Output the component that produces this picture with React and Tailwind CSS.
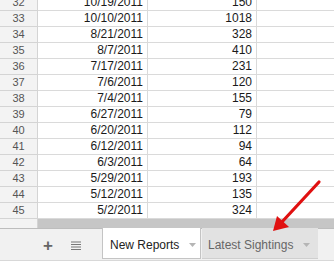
import React from "react";

const rows = [
  [32, "10/19/2011", 150],
  [33, "10/10/2011", 1018],
  [34, "8/21/2011", 328],
  [35, "8/7/2011", 410],
  [36, "7/17/2011", 231],
  [37, "7/6/2011", 120],
  [38, "7/4/2011", 155],
  [39, "6/27/2011", 79],
  [40, "6/20/2011", 112],
  [41, "6/12/2011", 94],
  [42, "6/3/2011", 64],
  [43, "5/29/2011", 193],
  [44, "5/12/2011", 135],
  [45, "5/2/2011", 324],
];

const Caret = () => (
  <svg width="7" height="4" viewBox="0 0 7 4" className="ml-[10px]">
    <path d="M0 0h7L3.5 4z" fill="#b5b5b5" />
  </svg>
);

const App = () => {
  return (
    <div
      className="relative w-[334px] h-[265px] overflow-hidden bg-white"
      style={{ fontFamily: '"Liberation Sans", Arial, sans-serif' }}
    >
      {/* Sheet rows */}
      <div className="-mt-[5px]">
        {rows.map(([n, date, count]) => (
          <div key={n} className="flex h-[16px] text-[12px] leading-[15px]">
            <div className="w-[38px] shrink-0 bg-[#f3f3f3] border-r border-b border-[#d4d4d4] text-center text-[11px] text-[#555]">
              {n}
            </div>
            <div className="w-[110px] shrink-0 border-r border-b border-[#dadada] text-right pr-[4px] text-[#1a1a1a]">
              {date}
            </div>
            <div className="w-[109px] shrink-0 border-r border-b border-[#dadada] text-right pr-[4px] text-[#1a1a1a]">
              {count}
            </div>
            <div className="flex-1 border-b border-[#dadada]" />
          </div>
        ))}
      </div>

      {/* Horizontal scrollbar */}
      <div className="flex h-[9px]">
        <div className="w-[38px] bg-[#f3f3f3] border-r border-[#d4d4d4]" />
        <div className="flex-1 bg-[#c6c6c6]" />
      </div>

      {/* Sheet tab bar */}
      <div className="flex h-[32px] bg-[#f1f1f1] border-t border-[#bdbdbd]">
        <div className="w-[102px] flex items-center pt-[2px]">
          <span className="ml-[43px] text-[17px] leading-none font-bold text-[#666]">+</span>
          <svg width="10" height="9" viewBox="0 0 10 9" className="ml-[18px]">
            <path d="M0 1h10M0 3.5h10M0 6h10M0 8.5h10" stroke="#777" strokeWidth="1.2" />
          </svg>
        </div>
        <div className="w-[99px] h-[31px] -mt-px flex items-center pt-[3px] bg-white border border-t-0 border-[#c4c4c4] pl-[7px] text-[12px] text-[#222]">
          New Reports
          <Caret />
        </div>
        <div className="w-[116px] h-[31px] -mt-px ml-px flex items-center pt-[3px] bg-[#e2e2e2] border-b border-[#cfcfcf] pl-[6px] text-[12px] text-[#666]">
          Latest Sightings
          <Caret />
        </div>
      </div>

      {/* Status strip */}
      <div className="h-[6px] bg-white border-t border-[#d8d8d8]" />

      {/* Red annotation arrow */}
      <svg
        className="absolute left-0 top-0 pointer-events-none"
        width="334"
        height="265"
        viewBox="0 0 334 265"
      >
        <line x1="319" y1="182" x2="281" y2="223" stroke="#e01010" strokeWidth="3.2" strokeLinecap="round" />
        <path d="M273 231 L277 216 L289 227 Z" fill="#e01010" />
      </svg>
    </div>
  );
};

export default App;
